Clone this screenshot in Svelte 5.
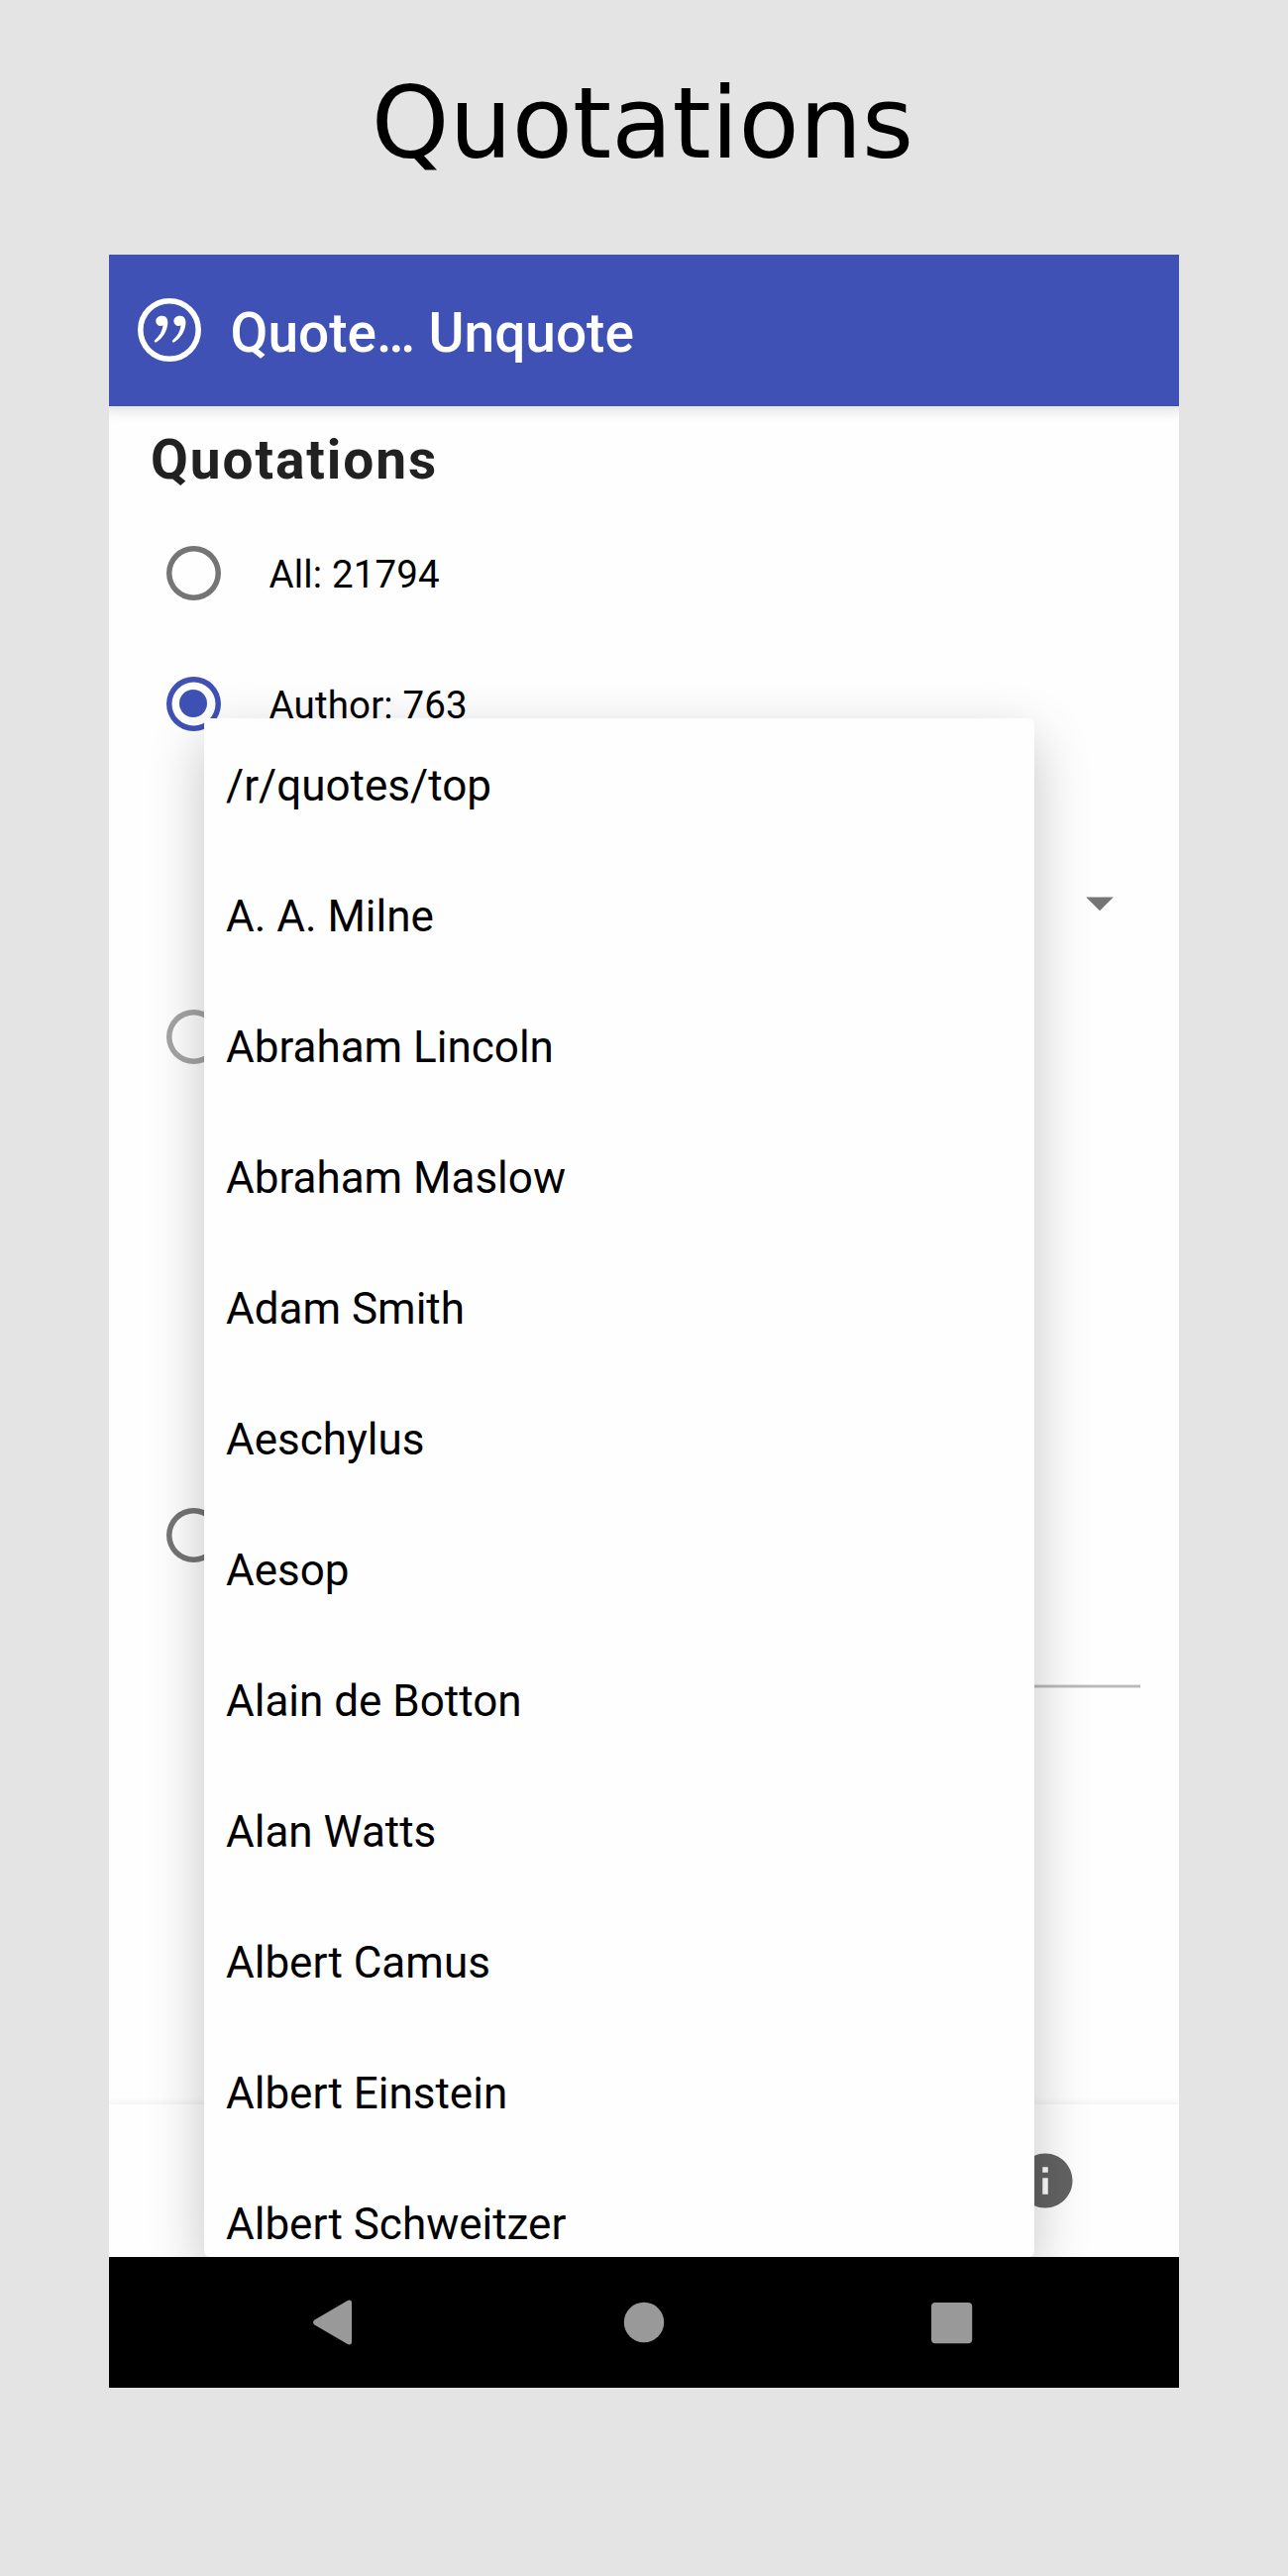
<script>
  const authors = [
    '/r/quotes/top', 'A. A. Milne', 'Abraham Lincoln', 'Abraham Maslow',
    'Adam Smith', 'Aeschylus', 'Aesop', 'Alain de Botton', 'Alan Watts',
    'Albert Camus', 'Albert Einstein', 'Albert Schweitzer'
  ];
</script>

<main>
  <h1>Quotations</h1>
  <div class="phone">
    <header>
      <svg class="logo" viewBox="0 0 64 64">
        <circle cx="32" cy="32" r="29.200" />
        <path d="M24.500 17.700c4.200 0 6.300 3.200 5.800 8.300-.9 7.800-4.900 13.800-11.300 18.300-1.700 1-3-.8-1.700-2.100 4.600-3.800 7.400-8.600 8.200-14.600-4 1.200-7.200-1.200-7.200-4.700 0-3.100 2.800-5.200 6.200-5.200z" />
        <path d="M42.600 17.700c4.200 0 6.300 3.200 5.800 8.300-.9 7.800-4.900 13.800-11.300 18.300-1.700 1-3-.8-1.700-2.100 4.600-3.800 7.400-8.600 8.200-14.600-4 1.200-7.200-1.200-7.200-4.700 0-3.100 2.800-5.200 6.200-5.200z" />
      </svg>
      <span class="app-name">Quote… Unquote</span>
    </header>

    <section class="content">
      <h2>Quotations</h2>
      <div class="option"><i class="radio"></i><span>All: 21794</span></div>
      <div class="option"><i class="radio checked"></i><span>Author: 763</span></div>
      <div class="spinner">
        <svg viewBox="0 0 24 24"><path d="M7 10l5 5 5-5z" /></svg>
      </div>
      <div class="option source"><i class="radio disabled"></i></div>
      <div class="option search"><i class="radio"></i></div>
      <div class="field"></div>
    </section>

    <footer>
      <svg viewBox="0 0 24 24"><path d="M12 2C6.480 2 2 6.480 2 12s4.480 10 10 10 10-4.480 10-10S17.520 2 12 2zm1 15h-2v-6h2v6zm0-8h-2V7h2v2z" /></svg>
    </footer>

    <ul class="popup">
      {#each authors as author}
        <li>{author}</li>
      {/each}
    </ul>

    <nav>
      <svg viewBox="0 0 1080 132">
        <path d="M207.500 68.500q-3-2.500 0-5L240 44.500q5-2.500 5 2v39q0 4.500-5 2z" />
        <circle cx="540" cy="66" r="20.200" />
        <rect x="830" y="46" width="41.200" height="41.200" rx="4" />
      </svg>
    </nav>
  </div>
</main>

<style>
  :global(body) {
    margin: 0;
    background: #e4e4e4;
  }
  main {
    display: flex;
    flex-direction: column;
    align-items: center;
    height: 2600px;
    background: #e4e4e4;
    font-family: Roboto, sans-serif;
    color: #000;
  }
  h1 {
    box-sizing: border-box;
    height: 257px;
    margin: 0;
    padding: 67px 3px 0 0;
    font: 400 100px/116px 'DejaVu Sans', sans-serif;
  }
  .phone {
    position: relative;
    display: flex;
    flex-direction: column;
    width: 1080px;
    height: 2153px;
    overflow: hidden;
    background: #fefefe;
  }
  header {
    display: flex;
    align-items: center;
    flex: none;
    height: 153px;
    padding-left: 29px;
    background: #3f51b5;
    box-shadow: 0 1px 12px 4px rgba(0, 0, 0, 0.12);
  }
  .logo {
    width: 64px;
    height: 64px;
    margin-bottom: 1px;
    fill: #fff;
  }
  .logo circle {
    fill: none;
    stroke: #fff;
    stroke-width: 5.6;
  }
  .app-name {
    padding: 4px 0 0 29.500px;
    color: #fff;
    font-size: 55px;
    font-weight: 500;
    line-height: 64px;
  }
  .content {
    flex: 1;
    display: flex;
    flex-direction: column;
  }
  h2 {
    height: 102px;
    margin: 0;
    padding-left: 42px;
    color: #212121;
    font-size: 55px;
    font-weight: 700;
    line-height: 108px;
    letter-spacing: 1.900px;
  }
  .option {
    display: flex;
    align-items: center;
    flex: none;
    height: 132px;
    padding-left: 57.500px;
    font-size: 38.500px;
  }
  .option span {
    padding: 2px 0 0 49px;
    letter-spacing: 0.150px;
  }
  .radio {
    width: 55px;
    height: 55px;
    border-radius: 50%;
    box-shadow: inset 0 0 0 5.500px #757575;
  }
  .checked {
    display: grid;
    place-items: center;
    box-shadow: inset 0 0 0 5.500px #3f51b5;
  }
  .checked::after {
    content: '';
    width: 28px;
    height: 28px;
    border-radius: 50%;
    background: #3f51b5;
  }
  .disabled {
    box-shadow: inset 0 0 0 5.500px #a4a4a4;
  }
  .spinner {
    display: flex;
    justify-content: flex-end;
    align-items: center;
    height: 204px;
    padding-right: 47px;
  }
  .spinner svg {
    width: 66px;
    height: 66px;
    margin-top: 65px;
    fill: #757575;
  }
  .source {
    margin-bottom: 371px;
  }
  .field {
    height: 2px;
    margin: 85px 39px 0 147px;
    background: #bababa;
    border: solid #e0e0e0;
    border-width: 1px 0;
  }
  footer {
    display: flex;
    justify-content: flex-end;
    align-items: center;
    flex: none;
    height: 154px;
    padding-right: 102px;
    background: #fefefe;
    box-shadow: 0 0 8px 1px rgba(0, 0, 0, 0.07);
  }
  footer svg {
    width: 66px;
    height: 66px;
    fill: #636363;
  }
  /* The open author list floats above the form. */
  .popup {
    position: absolute;
    top: 468px;
    left: 96px;
    box-sizing: border-box;
    width: 838px;
    height: 1553px;
    margin: 0;
    padding: 2px 0 0 22px;
    overflow: hidden;
    list-style: none;
    background: #fefefe;
    border-radius: 6px;
    box-shadow: 0 20px 56px rgba(0, 0, 0, 0.23);
  }
  li {
    height: 132px;
    font-size: 44px;
    line-height: 132px;
  }
  nav {
    position: relative;
    flex: none;
    height: 132px;
    background: #000;
  }
  nav svg {
    display: block;
    width: 1080px;
    height: 132px;
    fill: #999;
  }
</style>
